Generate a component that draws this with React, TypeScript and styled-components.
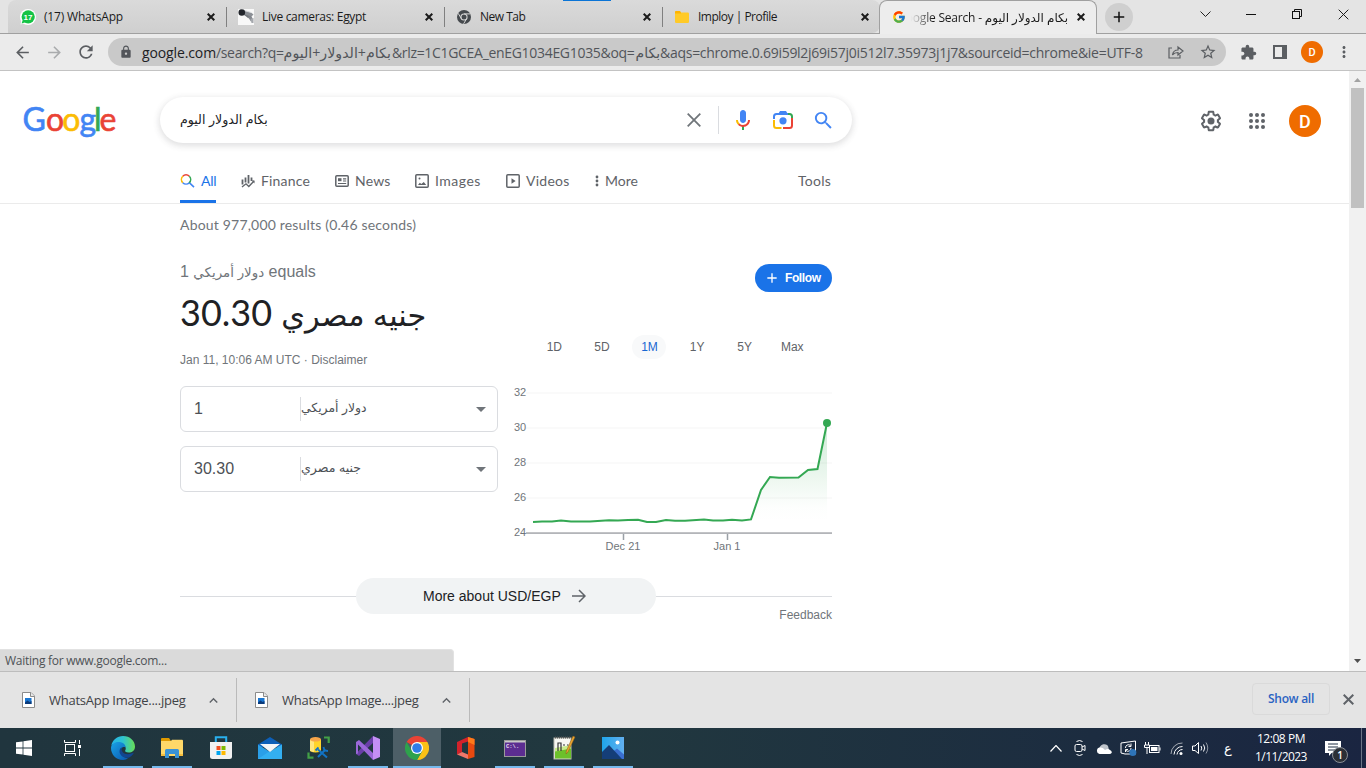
import React from "react";
import styled, { createGlobalStyle } from "styled-components";
import {
  MdArrowBack, MdArrowForward, MdRefresh, MdLock, MdStarBorder, MdExtension, MdMoreVert,
  MdKeyboardArrowUp, MdSearch, MdAdd,
} from "react-icons/md";
import { FcGoogle } from "react-icons/fc";

const SEGOE = `"Open Sans", "DejaVu Sans", sans-serif`;
const ARIAL = `"Liberation Sans", "DejaVu Sans", sans-serif`;
const GSANS = `Lato, "DejaVu Sans", sans-serif`;

const Global = createGlobalStyle`
  * { box-sizing: border-box; }
  body { margin: 0; background: #fff; overflow: hidden; font-family: ${ARIAL}; }
  svg { display: block; flex: none; }
`;

const Txt = styled.span<{ $s?: number; $f?: string; $ls?: number; $c?: string; $w?: number }>`
  display: inline-block;
  flex: none;
  white-space: pre;
  font-family: ${(p) => p.$f ?? ARIAL};
  font-size: ${(p) => p.$s ?? 12}px;
  font-weight: ${(p) => p.$w ?? 400};
  letter-spacing: ${(p) => p.$ls ?? 0}px;
  color: ${(p) => p.$c ?? "inherit"};
`;
const Spacer = styled.div<{ $w?: number; $h?: number }>`
  width: ${(p) => p.$w ?? 0}px; height: ${(p) => p.$h ?? 0}px; flex: none;
`;

const Desktop = styled.div`
  width: 1366px; height: 768px; display: flex; flex-direction: column; overflow: hidden; background: #fff;
`;

/* ---------- tab strip ---------- */
const TabStrip = styled.div`
  height: 34px; display: flex; position: relative; background: #e4e4e4; flex: none;
  border-bottom: 1px solid #a0a0a0;
`;
const TopAccent = styled.div`
  position: absolute; left: 563px; top: 0; width: 48px; height: 1px; background: #0a74d6;
`;
const TabGroup = styled.div`
  display: flex; width: 872px; margin-left: 8px; background: linear-gradient(#dadada, #cfcfcf);
  border-radius: 8px 8px 8px 0; height: 33px; flex: none;
`;
const Tab = styled.div<{ $last?: boolean }>`
  width: 218px; height: 33px; display: flex; align-items: center; padding: 0 11px 0 12px; position: relative;
  color: #1b1b1b;
  &::after {
    content: ""; display: ${(p) => (p.$last ? "none" : "block")};
    position: absolute; right: -1px; top: 7px; width: 1px; height: 20px; background: #808080;
  }
`;
const Favicon = styled.div`width: 16px; height: 16px; display: grid; place-items: center; flex: none;`;
const TabTitle = styled.div`flex: 1; margin-left: 8px; display: flex;`;
const ActiveTab = styled.div`
  width: 218px; height: 34px; background: #ededed; border: 1px solid #a0a0a0; border-bottom: 0; margin-left: -1px;
  border-radius: 8px 8px 0 0; display: flex; align-items: center; padding: 0 8px 1px 12px; z-index: 1; color: #1b1b1b;
  position: relative; flex: none;
`;
const ActiveTitle = styled.div`
  width: 157px; margin: 0 9px 0 5px; overflow: hidden; direction: rtl; display: flex; justify-content: flex-start;
  mask-image: linear-gradient(to right, transparent 0, #000 22px);
`;
const NewTab = styled.div`
  width: 28px; height: 28px; border-radius: 50%; background: #cfcfcf; margin: 3px 0 0 8px; display: grid; place-items: center;
`;
const Controls = styled.div`margin-left: auto; display: flex; height: 28px;`;
const Control = styled.div`width: 46px; display: grid; place-items: center;`;

/* ---------- toolbar ---------- */
const Toolbar = styled.div`
  height: 37px; flex: none; background: #ebebeb; border-bottom: 1px solid #c3c3c3; display: flex; align-items: center;
  padding-left: 6px; color: #5b5e62;
`;
const ToolBtn = styled.div<{ $c?: string }>`
  width: 32px; height: 28px; display: grid; place-items: center; color: ${(p) => p.$c ?? "#5b5e62"}; flex: none;
`;
const Omnibox = styled.div`
  width: 1118px; height: 28px; border-radius: 14px; background: #c9c9c9; margin: 0 6px; display: flex; align-items: center;
  padding-left: 11px; color: #52555a; flex: none;
`;
const Url = styled.div`display: flex; align-items: center; margin-left: 9px; width: 1018px; height: 28px;`;
const SmallAvatar = styled.div`
  width: 22px; height: 22px; border-radius: 50%; background: #ef6c00; color: #fff; display: grid; place-items: center;
`;

/* ---------- page ---------- */
const Viewport = styled.div`height: 600px; flex: none; display: flex; position: relative;`;
const Page = styled.div`width: 1349px; flex: none;`;
const Scrollbar = styled.div`
  width: 17px; background: #f1f1f1; display: flex; flex-direction: column; align-items: center; padding: 7px 0 8px;
`;
const Thumb = styled.div`width: 13px; height: 120px; background: #c1c1c1; margin: 6px 0 auto;`;
const Header = styled.div`height: 132px; border-bottom: 1px solid #ebebeb; box-sizing: content-box;`;
const HeaderTop = styled.div`display: flex; height: 72px; padding-top: 26px;`;
const Logo = styled.svg`margin: -4px 0 0 20px;`;
const SearchBox = styled.div`
  width: 692px; height: 46px; margin-left: 40px; border-radius: 24px; background: #fff; flex: none;
  box-shadow: 0 2px 6px 1px rgba(64,60,67,.16); display: flex; align-items: center; padding-left: 20px; color: #202124;
`;
const Query = styled.div`width: 494px; padding-bottom: 2px;`;
const Divider = styled.div`width: 1px; height: 28px; background: #dadce0; margin: 0 12px 0 4px;`;
const IconCell = styled.div<{ $w?: number }>`width: ${(p) => p.$w ?? 40}px; display: grid; place-items: center;`;
const HeaderRight = styled.div`
  display: flex; margin: 8px 28px 0 auto; height: 32px; align-items: center;
`;
const Avatar = styled.div`
  width: 32px; height: 32px; border-radius: 50%; background: #ef6c00; color: #fff; display: grid; place-items: center; margin-left: 24px;
`;
const Nav = styled.div`display: flex; height: 34px; margin: 26px 0 0 180px; color: #5f6368;`;
const NavItem = styled.div<{ $w: number; $gap?: number; $active?: boolean }>`
  width: ${(p) => p.$w}px; height: 34px; display: flex; align-items: center; padding-bottom: 9px;
  margin-right: ${(p) => p.$gap ?? 0}px; flex: none;
  border-bottom: 3px solid ${(p) => (p.$active ? "#1a73e8" : "transparent")};
  color: ${(p) => (p.$active ? "#1a73e8" : "inherit")};
  svg { margin: 1px ${(p) => (p.$active ? 5 : 6)}px 0 0; }
`;
const Stats = styled.div`height: 41px; margin-left: 180px; display: flex; align-items: center; color: #70757a;`;
const Card = styled.div`display: flex; margin: 19px 0 0 180px; width: 652px; height: 300px;`;
const Converter = styled.div`width: 318px; flex: none;`;
const Line = styled.div<{ $h: number; $mt?: number }>`
  display: flex; align-items: baseline; height: ${(p) => p.$h}px; line-height: ${(p) => p.$h}px; margin-top: ${(p) => p.$mt ?? 0}px; color: #70757a;
`;
const Field = styled.div`
  height: 46px; border: 1px solid #dadce0; border-radius: 6px; margin-bottom: 14px; display: flex; align-items: center;
  padding: 0 11px 0 13px; color: #4d5156;
`;
const FieldValue = styled.div`width: 106px; display: flex;`;
const FieldUnit = styled.div`
  flex: 1; height: 24px; border-left: 1px solid #dadce0; display: flex; align-items: center; padding-bottom: 2px; margin-bottom: 1px;
`;
const ChartSide = styled.div`width: 334px; display: flex; flex-direction: column;`;
const Follow = styled.div`
  width: 77px; height: 28px; border-radius: 14px; background: #1a73e8; color: #fff; align-self: flex-end; display: flex; align-items: center;
  padding-left: 9px; gap: 5px;
`;
const Ranges = styled.div`display: flex; margin: 43px 0 0 39.300px; gap: 13.600px;`;
const Range = styled.div<{ $on?: boolean }>`
  width: 34px; height: 24px; border-radius: 12px; display: grid; place-items: center; flex: none;
  background: ${(p) => (p.$on ? "#f8f9fa" : "transparent")}; color: ${(p) => (p.$on ? "#1967d2" : "#5f6368")};
`;
const Chart = styled.svg`margin: 21px 0 0 12px;`;
const MoreRow = styled.div`
  width: 652px; height: 36px; margin: 14px 0 0 180px; display: flex; align-items: center;
`;
const Rule = styled.div`flex: 1; height: 1px; background: #dadce0;`;
const MorePill = styled.div`
  width: 300px; height: 36px; border-radius: 18px; background: #f1f3f4; display: flex; align-items: center; padding-left: 67px; color: #202124; gap: 11px;
`;
const Feedback = styled.div`width: 652px; margin: -6px 0 0 180px; display: flex; justify-content: flex-end; color: #70757a;`;
const StatusBubble = styled.div`
  position: absolute; left: 0; bottom: 0; width: 454px; height: 22px; background: #dadada; border: 1px solid #e2e2e2; border-left: 0; border-bottom: 0;
  border-radius: 0 4px 0 0; padding-left: 5px; display: flex; align-items: center; color: #4e5256;
`;

/* ---------- downloads ---------- */
const Downloads = styled.div`
  height: 57px; flex: none; background: #e4e4e4; border-top: 1px solid #bdbdbd; display: flex; align-items: center; color: #3f4246;
`;
const Download = styled.div<{ $w: number }>`
  width: ${(p) => p.$w}px; height: 44px; border-right: 1px solid #bababa; display: flex; align-items: center; padding-right: 14px; justify-content: flex-end;
`;
const FileName = styled.div`width: 137px; margin: 0 19px 0 14px; display: flex;`;
const ShowAll = styled.div`
  width: 78px; height: 32px; border: 1px solid #dadada; border-radius: 4px; margin: 0 0 3px auto; display: grid; place-items: center; color: #2a62c2;
`;
const CloseBar = styled.div`width: 36px; display: grid; place-items: center; margin-bottom: 2px;`;

/* ---------- taskbar ---------- */
const Taskbar = styled.div`
  height: 40px; flex: none; display: flex; background: linear-gradient(90deg, #20353e 0, #21383f 45%, #1c2c40 80%, #1a2541 100%); color: #fff;
`;
const Task = styled.div<{ $line?: boolean; $on?: boolean; $ml?: number }>`
  width: 48px; margin-left: ${(p) => p.$ml ?? 0}px; display: grid; place-items: center; position: relative; flex: none;
  background: ${(p) => (p.$on ? "#4d5f67" : "transparent")};
  &::after {
    content: ""; display: ${(p) => (p.$line ? "block" : "none")}; position: absolute; bottom: 0; height: 2px; background: #76b9ed;
    left: ${(p) => (p.$on ? 0 : 4)}px; right: ${(p) => (p.$on ? 0 : 4)}px;
  }
`;
const Tray = styled.div`margin-left: auto; display: flex; align-items: center;`;
const TrayCell = styled.div<{ $w?: number }>`width: ${(p) => p.$w ?? 24}px; height: 40px; display: grid; place-items: center; position: relative;`;
const Clock = styled.div`width: 74px; display: flex; flex-direction: column; align-items: center; height: 36px; line-height: 18px;`;
const Badge = styled.div`
  position: absolute; left: 14px; top: 19px; width: 16px; height: 16px; border-radius: 50%; background: #2b2f36; border: 1px solid #8a8f96;
  display: grid; place-items: center; line-height: 14px;
`;
const PeekLine = styled.div`width: 5px; height: 40px; border-left: 1px solid #6a7586;`;

const X = ({ s = 8, w = 2, c = "#1b1b1b" }: { s?: number; w?: number; c?: string }) => (
  <svg width={s} height={s} viewBox={`0 0 ${s} ${s}`}>
    <path d={`M.7.7L${s - 0.7} ${s - 0.7}M${s - 0.7}.7L.7 ${s - 0.7}`} stroke={c} strokeWidth={w} />
  </svg>
);

const WhatsAppIcon = () => (
  <svg width="16" height="16" viewBox="0 0 16 16">
    <circle cx="8" cy="8" r="8" fill="#fff" />
    <path d="M.5 15.500l1-4L5 14z" fill="#fff" />
    <circle cx="8.200" cy="7.800" r="6.600" fill="#15c346" />
    <path d="M1.600 14.600l1.300-4 2.600 2.700z" fill="#15c346" />
    <text x="8" y="10.700" fontFamily="Liberation Sans, sans-serif" fontSize="8" fontWeight="700" fill="#fff" textAnchor="middle">17</text>
  </svg>
);
const CameraIcon = () => (
  <svg width="16" height="16" viewBox="0 0 16 16">
    <rect width="16" height="16" fill="#f8f8f8" />
    <path d="M2 .5l11 3 2.500 2L13 8 4 5.500z" fill="#8c9096" />
    <path d="M5 1l8 2.500" stroke="#d8dadd" strokeWidth="1" />
    <path d="M5 5l8 2.500 1 2-4-.5z" fill="#6f7379" />
    <circle cx="3.800" cy="3.500" r="3.300" fill="#22252b" />
    <path d="M9.500 7.500h4l1.500 3-2 2z" fill="#85898f" />
    <path d="M12.500 10l1 4h2V9z" fill="#a5a8ad" />
  </svg>
);
const GreyChrome = () => (
  <svg width="14" height="14" viewBox="0 0 14 14">
    <circle cx="7" cy="7" r="7" fill="#45494d" />
    <circle cx="7" cy="7" r="3.600" fill="#d6d6d6" />
    <circle cx="7" cy="7" r="2.500" fill="#45494d" />
    <path d="M7 3.900h6.200M4.300 8.600L1.200 3.300M9.700 8.600l-3.100 5.200" stroke="#d6d6d6" strokeWidth="1" />
  </svg>
);
const FolderIcon = () => (
  <svg width="14" height="12" viewBox="0 0 14 12">
    <path d="M0 1.200Q0 0 1.200 0h3.600L6 1.600h6.800Q14 1.600 14 2.800V10.800Q14 12 12.800 12H1.200Q0 12 0 10.800z" fill="#ffca28" />
    <path d="M0 1.200Q0 0 1.200 0h3.600L6 1.600v1H0z" fill="#ffb300" />
  </svg>
);
const LensIcon = () => (
  <svg width="24" height="24" viewBox="0 0 24 24" fill="none" strokeWidth="2">
    <path d="M3 11V8.500Q3 6 5.500 6H17" stroke="#4285f4" />
    <path d="M7.500 5.500L9 3h6l1.500 2.500z" fill="#4285f4" />
    <path d="M17 6h1.500Q21 6 21 8.500V10" stroke="#34a853" />
    <path d="M21 10v7.500Q21 20 18.500 20H12" stroke="#ea4335" />
    <path d="M3 12v5.500Q3 20 5.500 20H10.500" stroke="#fbbc04" />
    <circle cx="12" cy="12.800" r="3.600" fill="#4285f4" />
  </svg>
);
const MicIcon = () => (
  <svg width="24" height="24" viewBox="0 0 24 24">
    <path fill="#4285f4" d="m12 15c1.66 0 3-1.31 3-2.97v-7.02c0-1.66-1.34-3.01-3-3.01s-3 1.34-3 3.01v7.02c0 1.66 1.34 2.97 3 2.97z" />
    <path fill="#34a853" d="m11 18.080h2v3.920h-2z" />
    <path fill="#fbbc04" d="m7.05 16.870c-1.270-1.330-2.050-2.830-2.050-4.870h2c0 1.450 0.560 2.420 1.470 3.380v0.320l-1.150 1.180z" />
    <path fill="#ea4335" d="m12 16.930a4.970 5.250 0 0 1 -3.540 -1.550l-1.410 1.490c1.260 1.340 3.020 2.130 4.950 2.130 3.870 0 6.990-2.920 6.990-7h-1.990c0 2.920-2.240 4.930-5 4.930z" />
  </svg>
);
const GearIcon = () => (
  <svg width="24" height="24" viewBox="0 0 24 24" fill="#5f6368">
    <path d="M13.85 22.25h-3.7c-.74 0-1.36-.54-1.45-1.27l-.27-1.89c-.27-.14-.53-.29-.79-.46l-1.8.72c-.7.26-1.47-.03-1.81-.65L2.2 15.53c-.35-.66-.2-1.44.36-1.88l1.53-1.19c-.01-.15-.02-.3-.02-.46 0-.15.01-.31.02-.46l-1.52-1.19c-.59-.45-.74-1.26-.37-1.88l1.85-3.19c.34-.62 1.11-.9 1.79-.63l1.81.73c.26-.17.52-.32.78-.46l.27-1.91c.09-.7.71-1.25 1.44-1.25h3.7c.74 0 1.36.54 1.45 1.27l.27 1.89c.27.14.53.29.79.46l1.8-.72c.71-.26 1.48.03 1.82.65l1.84 3.18c.36.66.2 1.44-.36 1.88l-1.52 1.19c.01.15.02.3.02.46s-.01.31-.02.46l1.52 1.19c.56.45.72 1.23.37 1.86l-1.86 3.22c-.34.62-1.11.9-1.8.63l-1.8-.72c-.26.17-.52.32-.78.46l-.27 1.91c-.1.68-.72 1.22-1.46 1.22zm-3.23-2h2.76l.37-2.55.53-.22c.44-.18.88-.44 1.34-.78l.45-.34 2.38.96 1.38-2.4-2.03-1.58.07-.56c.03-.26.06-.51.06-.78s-.03-.53-.06-.78l-.07-.56 2.03-1.58-1.39-2.4-2.39.96-.45-.35c-.42-.32-.87-.58-1.33-.77l-.52-.22-.37-2.55h-2.76l-.37 2.55-.53.21c-.44.19-.88.44-1.34.79l-.45.33-2.38-.95-1.39 2.39 2.03 1.58-.07.56a7 7 0 0 0-.06.79c0 .26.02.53.06.78l.07.56-2.03 1.58 1.38 2.4 2.39-.96.45.35c.43.33.86.58 1.33.77l.53.22.38 2.55z" />
    <circle cx="12" cy="12" r="3.500" />
  </svg>
);
const AppsIcon = () => (
  <svg width="16" height="16" viewBox="0 0 16 16" fill="#5f6368">
    {[2, 8, 14].map((y) => [2, 8, 14].map((x) => <circle key={`${x}${y}`} cx={x} cy={y} r="2" />))}
  </svg>
);
const AllIcon = () => (
  <svg width="16" height="16" viewBox="0 0 16 16" fill="none" strokeWidth="1.600">
    <path d="M2.800 3.200A4.600 4.600 0 0 1 9.300 3.200" stroke="#ea4335" />
    <path d="M2.800 3.200A4.600 4.600 0 0 0 2.800 9.700" stroke="#fbbc04" />
    <path d="M2.800 9.700A4.600 4.600 0 0 0 9.300 9.700L14 14.200" stroke="#4285f4" />
    <path d="M9.300 9.700A4.600 4.600 0 0 0 9.300 3.200" stroke="#34a853" />
  </svg>
);
const FinanceIcon = () => (
  <svg width="14" height="14" viewBox="0 0 14 14" fill="none" stroke="#5f6368">
    <path d="M1.500 5.500v5M4.500 3.500v5M7.500 1v8.500M10.500 3.500v3.500" strokeWidth="1.800" />
    <path d="M1 13L5 9.800l2.800 2.600L13 7" strokeWidth="1.400" />
    <path d="M10.500 6.500h3v3z" fill="#5f6368" stroke="none" />
  </svg>
);
const NewsIcon = () => (
  <svg width="14" height="12" viewBox="0 0 14 12" fill="none" stroke="#5f6368">
    <rect x=".8" y=".8" width="12.400" height="10.400" rx="1" strokeWidth="1.500" />
    <rect x="3" y="3.200" width="3.500" height="3" fill="#5f6368" stroke="none" />
    <path d="M8 3.800h3.200M8 6h3.200M3 8.500h8.200" strokeWidth="1.200" />
  </svg>
);
const ImagesIcon = () => (
  <svg width="14" height="14" viewBox="0 0 14 14" fill="none" stroke="#5f6368">
    <rect x=".8" y=".8" width="12.400" height="12.400" rx="1" strokeWidth="1.500" />
    <path d="M3 11l1.800-2.300 1.500 1.400L8.800 8l2.400 3z" fill="#5f6368" stroke="none" />
    <circle cx="4.500" cy="4.500" r="1" fill="#5f6368" stroke="none" />
  </svg>
);
const VideosIcon = () => (
  <svg width="14" height="14" viewBox="0 0 14 14" fill="none" stroke="#5f6368">
    <rect x=".8" y=".8" width="12.400" height="12.400" rx="1" strokeWidth="1.500" />
    <path d="M5.500 4.300v5.400L9.600 7z" fill="#5f6368" stroke="none" />
  </svg>
);
const DotsIcon = () => (
  <svg width="4" height="12" viewBox="0 0 4 12" fill="#5f6368">
    <circle cx="2" cy="2" r="1.400" /><circle cx="2" cy="6" r="1.400" /><circle cx="2" cy="10" r="1.400" />
  </svg>
);
const Caret = () => (
  <svg width="10" height="5" viewBox="0 0 10 5"><path d="M0 0h10L5 5z" fill="#70757a" /></svg>
);
const FileIcon = () => (
  <svg width="13" height="16" viewBox="0 0 13 16">
    <path d="M.5.5h8.500l3.500 3.500v11.500H.5z" fill="#fff" stroke="#8b8b8b" />
    <path d="M8.500.5v4h4" fill="#e8e8e8" stroke="#8b8b8b" />
    <rect x="3" y="6" width="6.500" height="6" fill="#1976d2" />
    <path d="M3 12V10.500l2.500-2 2 1.500 2-1V12z" fill="#0b3a7a" />
  </svg>
);

const points: [number, number][] = [
  [533, 522], [542, 521.5], [552, 521.5], [561, 520.4], [571, 521.6], [590, 521.6], [609, 520.2], [618, 520.6], [628, 519.9],
  [638, 519.7], [647, 521.9], [656, 521.9], [666, 520], [675, 520.7], [685, 520.7], [704, 519.5], [713, 520.6], [723, 520.6],
  [732, 519.8], [742, 520.4], [751, 519.4], [761, 490], [770, 477], [779, 477.7], [798.5, 477.6], [808, 470], [817.5, 469], [827, 423],
];
const linePath = points.map(([x, y], i) => `${i ? "L" : "M"}${x - 510} ${y - 380}`).join("");

const PriceChart = () => (
  <Chart width="324" height="176" viewBox="0 0 324 176">
    <defs>
      <linearGradient id="fade" x1="0" y1="43" x2="0" y2="142" gradientUnits="userSpaceOnUse">
        <stop offset="0" stopColor="#34a853" stopOpacity=".24" />
        <stop offset="0.850" stopColor="#34a853" stopOpacity="0.01" />
        <stop offset="1" stopColor="#34a853" stopOpacity="0" />
      </linearGradient>
    </defs>
    {[13, 48, 83, 118].map((y) => (
      <rect key={y} x="16" y={y - 1} width="306" height="2" fill="#fafafa" />
    ))}
    <path d={`${linePath}L317 153L23 153Z`} fill="url(#fade)" />
    <rect x="16" y="152.200" width="306" height="1.800" fill="#b3b5b9" />
    <path d="M113.500 154v6M217.500 154v6" stroke="#9aa0a6" strokeWidth="1.500" />
    <path d={linePath} fill="none" stroke="#34a853" strokeWidth="2" />
    <circle cx="317" cy="43" r="4" fill="#34a853" />
    <g fontFamily="Liberation Sans, sans-serif" fontSize="11" fill="#70757a">
      {["32", "30", "28", "26", "24"].map((t, i) => (
        <text key={t} x="4" y={16 + i * 35}>{t}</text>
      ))}
      <text x="113" y="170" textAnchor="middle">Dec 21</text>
      <text x="217" y="170" textAnchor="middle">Jan 1</text>
    </g>
  </Chart>
);

/* taskbar icons */
const Windows = () => (
  <svg width="16" height="16" viewBox="0 0 16 16" fill="#fff">
    <path d="M0 2.300L6.600 1.400V7.600H0zM7.400 1.300L16 0V7.600H7.400zM0 8.400H6.600V14.600L0 13.700zM7.400 8.400H16V16L7.400 14.700z" />
  </svg>
);
const TaskView = () => (
  <svg width="17" height="16" viewBox="0 0 17 16" fill="none" stroke="#fff">
    <path d="M.5 0v2.500h11V0M.5 16v-2.500h11V16M15.500 0v4M15.500 9v7" /><rect x="1.500" y="4.500" width="9" height="7" />
    <rect x="14" y="5" width="3" height="3" fill="#fff" stroke="none" />
  </svg>
);
const Edge = () => (
  <svg width="24" height="24" viewBox="0 0 24 24">
    <defs>
      <linearGradient id="e1" x1="0" x2="1"><stop offset="0" stopColor="#25b4e8" /><stop offset=".5" stopColor="#2fc3cf" /><stop offset="1" stopColor="#68dd55" /></linearGradient>
      <linearGradient id="e2" x1="0" y1="0" x2="1" y2="1"><stop offset="0" stopColor="#1aa3e6" /><stop offset="1" stopColor="#0a57b0" /></linearGradient>
    </defs>
    <path d="M.3 9.500C1.500 4 6.200 0 12 0c7 0 12 5 12 10.500 0 4-3 6-6.300 6-3 0-4.200-1-3.400-2.200 1-1.500.8-5.300-4.300-6.300C6 7.200 2 7.800.3 9.500z" fill="url(#e1)" />
    <path d="M0 12c0-4 4-6.500 8.500-6 4 .4 6.300 3 6 5.500-1.500-1.500-6 .5-5 5 .8 3.700 4.500 5.500 7.500 5.500-1 1-3 2-5 2C5 24 0 18.500 0 12z" fill="url(#e2)" />
    <path d="M9 13c-2 5 2.500 9.500 8.500 8.700 2-.8 4-2.500 5-4.200.3-.6-.2-.8-.7-.5-4 2-9.300 1.500-10.800-2-.6-1.400-.3-2.600.5-3.500-1 0-2 .5-2.500 1.500z" fill="#11458f" />
  </svg>
);
const Explorer = () => (
  <svg width="22" height="20" viewBox="0 0 22 20">
    <path d="M0 1Q0 0 1 0h7l2 3H0z" fill="#e09a00" /><path d="M0 3h10l1-1.300h10Q22 1.700 22 3v15H0z" fill="#ffd869" />
    <path d="M4 20v-7.500Q4 11 5.500 11h11Q18 11 18 12.500V20h-4v-4H8v4z" fill="#3a93d6" /><path d="M0 18h4v-2H0zM18 18h4v-2h-4z" fill="#f5bd3c" />
  </svg>
);
const Store = () => (
  <svg width="24" height="24" viewBox="0 0 24 24">
    <path d="M6.800 7V1.300h10.400V7" fill="none" stroke="#29b0ee" strokeWidth="2" />
    <path d="M1 6h22v14.500Q23 23 20.500 23h-17Q1 23 1 20.500z" fill="#f1f1f1" />
    <path d="M7.500 10h4v4h-4z" fill="#f25022" /><path d="M12.500 10h4v4h-4z" fill="#7fba00" />
    <path d="M7.500 15h4v4h-4z" fill="#00a4ef" /><path d="M12.500 15h4v4h-4z" fill="#ffb900" />
  </svg>
);
const Mail = () => (
  <svg width="24" height="22" viewBox="0 0 24 22">
    <path d="M0 7.500L12 0l12 7.500V10H0z" fill="#0d5fb8" />
    <path d="M0 7.500L12 15 24 7.500V22H0z" fill="#2a9fe8" />
    <path d="M0 22L12 14l12-6.500V22z" fill="#38b6f5" opacity=".7" />
    <path d="M2 7h20l-10 8z" fill="#f3f5f8" />
  </svg>
);
const Ssms = () => (
  <svg width="24" height="24" viewBox="0 0 24 24">
    <path d="M3 3.500h11v11.500Q8.500 18 3 15z" fill="#ffd42a" /><path d="M3 3.500h4v12.500l-4-1z" fill="#ffe680" /><ellipse cx="8.500" cy="3.300" rx="5.500" ry="2.300" fill="#f6a54a" />
    <path d="M17 1.500h4.700V7M1.500 16.500v5.200h5" fill="none" stroke="#43a047" strokeWidth="2.200" />
    <path d="M11 13.500l9 8M11 21l7.500-7.500" stroke="#1273c4" strokeWidth="2" /><path d="M8.500 14.500l3-3M16.500 11l1 3.500 3.500.5" stroke="#1273c4" strokeWidth="1.800" fill="none" />
  </svg>
);
const VisualStudio = () => (
  <svg width="24" height="24" viewBox="0 0 24 24">
    <path d="M17 0l7 3v18l-7 3z" fill="#c48ff5" />
    <path d="M0 18l3 2L17 7V0L5.500 11.800 2 15.500V8.500L0 6z" fill="#6a3fa8" />
    <path d="M3 4l14 13v7L2 8.500v9L0 18V6z" fill="#9a68d8" />
  </svg>
);
const Chrome = () => (
  <svg width="24" height="24" viewBox="0 0 24 24">
    <path d="M12 12L1.600 6A12 12 0 0 1 22.400 6z" fill="#ea4335" />
    <path d="M12 6h10.400A12 12 0 0 1 12 24l5.200-9z" fill="#fbc116" />
    <path d="M1.600 6A12 12 0 0 0 12 24l5.200-9L12 12 6.800 15z" fill="#2ea24c" />
    <circle cx="12" cy="12" r="6" fill="#fff" /><circle cx="12" cy="12" r="4.800" fill="#2f7de9" />
  </svg>
);
const Office = () => (
  <svg width="18" height="22" viewBox="0 0 18 22">
    <path d="M0 5L11 0v4.500L5 6.500V15l-5 2.500z" fill="#d3222b" /><path d="M11 0l6.500 2v18L11 22z" fill="#e8490f" />
    <path d="M0 17.500L5 15l6 2.500V22z" fill="#f0776a" /><path d="M11 0l6.500 2v6L11 5z" fill="#ff7a1a" />
  </svg>
);
const Terminal = () => (
  <svg width="22" height="17" viewBox="0 0 22 17">
    <rect x=".5" y=".5" width="21" height="16" fill="#5c2d91" stroke="#9a9a9a" /><rect x="1" y="1" width="20" height="1.500" fill="#c9c9c9" />
    <text x="2" y="8" fontFamily="Liberation Mono, monospace" fontSize="5.500" fontWeight="700" fill="#e8e0f0">C:\.</text>
  </svg>
);
const Notepad = () => (
  <svg width="23" height="24" viewBox="0 0 23 24">
    <rect x="1" y="2" width="17" height="21" fill="#f7f7f2" stroke="#b9b9b0" /><path d="M2 12l16-3v13H2z" fill="#c8ec8a" /><path d="M2 15.500l16-3v10H2z" fill="#6cc02a" />
    <path d="M2 1.500h15" stroke="#555" strokeWidth="2" strokeDasharray="1 1" /><path d="M5 15V7h3v8M10 9h2M14 9h1.500" fill="none" stroke="#333" strokeWidth="1.200" />
    <path d="M22 1l-7 15-2 2 .3-3L20 0z" fill="#e9a532" stroke="#8a5a14" strokeWidth=".5" />
  </svg>
);
const Photos = () => (
  <svg width="22" height="22" viewBox="0 0 22 22">
    <defs><linearGradient id="ph" x1="0" x2="1"><stop offset="0" stopColor="#1fa5ea" /><stop offset="1" stopColor="#62b0f0" /></linearGradient></defs>
    <rect width="22" height="22" fill="url(#ph)" /><path d="M9 16l6-4.500 7 6V22H9z" fill="#3a6fd0" />
    <path d="M0 15l7-7 13 14H0z" fill="#153e78" /><circle cx="15.500" cy="5.500" r="2" fill="#fff" />
  </svg>
);

const tasks: { el: React.ReactNode; line?: boolean; on?: boolean }[] = [
  { el: <Edge />, line: true }, { el: <Explorer />, line: true }, { el: <Store /> }, { el: <Mail /> }, { el: <Ssms /> },
  { el: <VisualStudio />, line: true }, { el: <Chrome />, line: true, on: true }, { el: <Office /> }, { el: <Terminal />, line: true },
  { el: <Notepad />, line: true }, { el: <Photos />, line: true },
];

const tabs = [
  { icon: <WhatsAppIcon />, title: "(17) WhatsApp", ls: -0.18 },
  { icon: <CameraIcon />, title: "Live cameras: Egypt", ls: -0.3 },
  { icon: <GreyChrome />, title: "New Tab", ls: -0.5 },
  { icon: <FolderIcon />, title: "Imploy | Profile", ls: -0.5 },
];

const navItems = [
  { icon: <AllIcon />, label: "All", w: 36, gap: 25, ls: -0.2 },
  { icon: <FinanceIcon />, label: "Finance", w: 69, gap: 25, ls: 0.18 },
  { icon: <NewsIcon />, label: "News", w: 55, gap: 25, ls: 0.2 },
  { icon: <ImagesIcon />, label: "Images", w: 66, gap: 25, ls: 0.5 },
  { icon: <VideosIcon />, label: "Videos", w: 64, gap: 25, ls: 0.25 },
  { icon: <DotsIcon />, label: "More", w: 43, gap: 160, ls: 0 },
  { icon: null, label: "Tools", w: 33, gap: 0, ls: 0.25 },
];

const ranges = ["1D", "5D", "1M", "1Y", "5Y", "Max"];

export default function App() {
  return (
    <Desktop>
      <Global />
      <TabStrip>
        <TopAccent />
        <TabGroup>
          {tabs.map((t, i) => (
            <Tab key={t.title} $last={i === tabs.length - 1}>
              <Favicon>{t.icon}</Favicon>
              <TabTitle><Txt $f={SEGOE} $ls={t.ls}>{t.title}</Txt></TabTitle>
              <X />
            </Tab>
          ))}
        </TabGroup>
        <ActiveTab>
          <FcGoogle size={14} />
          <ActiveTitle><Txt $f={SEGOE}>بكام الدولار اليوم</Txt><Txt $f={SEGOE} $ls={-0.2} dir="ltr">Google Search - </Txt></ActiveTitle>
          <X />
        </ActiveTab>
        <NewTab><MdAdd size={18} color="#111" /></NewTab>
        <Controls>
          <Control><svg width="11" height="6" viewBox="0 0 11 6"><path d="M.5.5l5 5 5-5" fill="none" stroke="#222" /></svg></Control>
          <Control><svg width="10" height="1"><rect width="10" height="1" fill="#111" /></svg></Control>
          <Control><svg width="10" height="10" viewBox="0 0 10 10" fill="none" stroke="#111"><rect x=".5" y="2.500" width="7" height="7" /><path d="M2.500 2.500v-2h7v7h-2" /></svg></Control>
          <Control><X s={11} w={1} /></Control>
        </Controls>
      </TabStrip>

      <Toolbar>
        <ToolBtn><MdArrowBack size={19} /></ToolBtn>
        <ToolBtn $c="#a9abad"><MdArrowForward size={19} /></ToolBtn>
        <ToolBtn><MdRefresh size={20} /></ToolBtn>
        <Omnibox>
          <MdLock size={14} />
          <Url>
            <Txt $s={14} $f={SEGOE} $c="#202124" $ls={-0.12}>google.com</Txt>
            <Txt $s={14} $f={SEGOE} $ls={-0.35}>/search?q=</Txt>
            <Txt $s={14.2} $f={SEGOE} dir="rtl">بكام+الدولار+اليوم</Txt>
            <Spacer $w={1} />
            <Txt $s={14} $f={SEGOE} $ls={-0.31}>&amp;rlz=1C1GCEA_enEG1034EG1035&amp;oq=</Txt>
            <Spacer $w={1} />
            <Txt $s={14} $f={SEGOE}>بكام</Txt>
            <Txt $s={14} $f={SEGOE} $ls={-0.28}>&amp;aqs=chrome.0.69i59l2j69i57j0i512l7.35973j1j7&amp;sourceid=chrome&amp;ie=UTF-8</Txt>
          </Url>
          <ToolBtn>
            <svg width="16" height="14" viewBox="0 0 16 14" fill="none" stroke="#5b5e62" strokeWidth="1.200"><path d="M4 3H1v10h11v-3" /><path d="M4.500 10C5 6.500 7 5 10 5V2l5 4-5 4V7.500C7.500 7.500 6 8 4.500 10z" /></svg>
          </ToolBtn>
          <ToolBtn><MdStarBorder size={18} /></ToolBtn>
        </Omnibox>
        <ToolBtn><MdExtension size={17} /></ToolBtn>
        <ToolBtn><svg width="14" height="14" viewBox="0 0 14 14"><path d="M0 0h14v14H0zM2 2v10h7V2z" fill="#5b5e62" fillRule="evenodd" /></svg></ToolBtn>
        <ToolBtn><SmallAvatar><Txt $f="Roboto, sans-serif" $s={11} $w={500}>D</Txt></SmallAvatar></ToolBtn>
        <ToolBtn><MdMoreVert size={18} /></ToolBtn>
      </Toolbar>

      <Viewport>
        <Page>
          <Header>
            <HeaderTop>
              <Logo width="100" height="52" viewBox="0 0 100 52" fontFamily="Lato, sans-serif" fontSize="32" strokeWidth=".6">
                <text y="37.500">
                  <tspan x="2.500" fill="#4285f4" stroke="#4285f4">G</tspan><tspan x="26" fill="#ea4335" stroke="#ea4335">o</tspan>
                  <tspan x="42.300" fill="#fbbc05" stroke="#fbbc05">o</tspan><tspan x="59.500" fill="#4285f4" stroke="#4285f4">g</tspan>
                  <tspan x="74" fill="#34a853" stroke="#34a853">l</tspan><tspan x="79.500" fill="#ea4335" stroke="#ea4335">e</tspan>
                </text>
              </Logo>
              <SearchBox>
                <Query><Txt $s={12.6}>بكام الدولار اليوم</Txt></Query>
                <IconCell><X s={14} w={1.8} c="#70757a" /></IconCell>
                <Divider />
                <IconCell $w={24}><MicIcon /></IconCell>
                <IconCell $w={56}><LensIcon /></IconCell>
                <IconCell $w={24}><MdSearch size={23} color="#4285f4" /></IconCell>
              </SearchBox>
              <HeaderRight><GearIcon /><Spacer $w={26} /><AppsIcon /><Avatar><Txt $f="Roboto, sans-serif" $s={18} $w={500}>D</Txt></Avatar></HeaderRight>
            </HeaderTop>
            <Nav>
              {navItems.map((n, i) => (
                <NavItem key={n.label} $w={n.w} $gap={n.gap} $active={i === 0}>
                  {n.icon}<Txt $f={GSANS} $s={14} $ls={n.ls}>{n.label}</Txt>
                </NavItem>
              ))}
            </Nav>
          </Header>
          <Stats><Txt $f={GSANS} $s={14} $ls={0.19}>About 977,000 results (0.46 seconds)</Txt></Stats>
          <Card>
            <Converter>
              <Line $h={16}><Txt $s={16}>1 </Txt><Txt $s={13.4}>دولار أمريكي</Txt><Txt $s={16}> equals</Txt></Line>
              <Line $h={44} $mt={10}><Txt $f={GSANS} $s={36} $c="#202124">30.30 </Txt><Txt $s={30.4} $c="#202124">جنيه مصري</Txt></Line>
              <Line $h={16} $mt={18}><Txt>Jan 11, 10:06 AM UTC · </Txt><Txt>Disclaimer</Txt></Line>
              <Spacer $h={18} />
              <Field><FieldValue><Txt $s={16}>1</Txt></FieldValue><FieldUnit><Txt $s={12.4}>دولار أمريكي</Txt></FieldUnit><Caret /></Field>
              <Field><FieldValue><Txt $s={16}>30.30</Txt></FieldValue><FieldUnit><Txt $s={12.6}>جنيه مصري</Txt></FieldUnit><Caret /></Field>
            </Converter>
            <ChartSide>
              <Follow><MdAdd size={16} /><Txt $w={700} $ls={-0.4}>Follow</Txt></Follow>
              <Ranges>
                {ranges.map((r) => <Range key={r} $on={r === "1M"}><Txt>{r}</Txt></Range>)}
              </Ranges>
              <PriceChart />
            </ChartSide>
          </Card>
          <MoreRow><Rule /><MorePill><Txt $s={14}>More about USD/EGP</Txt>
            <svg width="14" height="14" viewBox="0 0 14 14" fill="none" stroke="#5f6368" strokeWidth="1.500"><path d="M0 7h13M7 1l6 6-6 6" /></svg>
          </MorePill><Rule /></MoreRow>
          <Feedback><Txt>Feedback</Txt></Feedback>
        </Page>
        <Scrollbar>
          <svg width="7" height="4" viewBox="0 0 7 4"><path d="M3.500 0L7 4H0z" fill="#a3a3a3" /></svg>
          <Thumb />
          <svg width="7" height="4" viewBox="0 0 7 4"><path d="M0 0h7L3.500 4z" fill="#505050" /></svg>
        </Scrollbar>
        <StatusBubble><Txt $f={SEGOE} $ls={-0.26}>Waiting for www.google.com...</Txt></StatusBubble>
      </Viewport>

      <Downloads>
        {[237, 233].map((w) => (
          <Download key={w} $w={w}><FileIcon /><FileName><Txt $f={SEGOE} $s={13} $ls={-0.25}>WhatsApp Image....jpeg</Txt></FileName><MdKeyboardArrowUp size={17} color="#5f6368" /></Download>
        ))}
        <ShowAll><Txt $f={SEGOE} $w={600} $ls={-0.25}>Show all</Txt></ShowAll>
        <CloseBar><X s={11} w={2} c="#5f6368" /></CloseBar>
      </Downloads>

      <Taskbar>
        <Task><Windows /></Task>
        <Task><TaskView /></Task>
        {tasks.map((t, i) => <Task key={i} $ml={i ? 1 : 3} $line={t.line} $on={t.on}>{t.el}</Task>)}
        <Tray>
          <TrayCell><svg width="12" height="7" viewBox="0 0 12 7"><path d="M.5 6.500l5.500-6 5.500 6" fill="none" stroke="#fff" strokeWidth="1.200" /></svg></TrayCell>
          <TrayCell><svg width="12" height="16" viewBox="0 0 12 16" fill="none" stroke="#fff"><path d="M2.500 1.500Q5.500-.5 8.500 1.500M2.500 14.500Q5.500 16.500 8.500 14.500" /><rect x="1" y="4.500" width="7" height="7" rx="1.500" /><path d="M8 7l3-1.500v5L8 9" /></svg></TrayCell>
          <TrayCell><svg width="16" height="11" viewBox="0 0 16 11"><path d="M4 10.500a4 4 0 0 1-.5-6A5 5 0 0 1 12 3l1 4z" fill="#bfc4ca" /><path d="M3.500 11a3.300 3.300 0 0 1 .5-6.500Q7 4 9 7q3-2 5 0 2.500 1.500 1.500 3-.5 1-2 1z" fill="#fff" /></svg></TrayCell>
          <TrayCell><svg width="17" height="16" viewBox="0 0 17 16" fill="none" stroke="#fff"><path d="M1 3l14.500-2v13H5L1 13z" /><path d="M5.500 8A3 3 0 0 1 10.500 5.500M11 3.500v3H8.500M11 8A3 3 0 0 1 6 10.500M5.500 12V9.500H8" /><circle cx="12.800" cy="12.500" r="3.500" fill="#2e74b8" stroke="none" /></svg></TrayCell>
          <TrayCell><svg width="17" height="13" viewBox="0 0 17 13" fill="none" stroke="#fff"><path d="M1.500 0v3M4.500 0v3M.5 3h5v2.500h-5zM3 5.500V12" /><rect x="5.500" y="3.500" width="9.500" height="7" /><rect x="7" y="5" width="6.500" height="4" fill="#fff" stroke="none" /><path d="M16 5.500v3" /></svg></TrayCell>
          <TrayCell><svg width="13" height="13" viewBox="0 0 13 13" fill="none" stroke="#fff"><path d="M1 12A11 11 0 0 1 12.500 1" opacity=".6" /><path d="M4 12.500A8.500 8.500 0 0 1 12.500 4.500M7 12.500A5.500 5.500 0 0 1 12.500 7.500" /><circle cx="11" cy="11.500" r="1.500" fill="#fff" stroke="none" /></svg></TrayCell>
          <TrayCell><svg width="17" height="14" viewBox="0 0 17 14" fill="none" stroke="#fff"><path d="M.5 5h2.500l3.500-3.500v11L3 9.500H.5z" /><path d="M9 5q1.500 2 0 4.500M11.500 3.500q2.500 3.500 0 7" /><path d="M14 1.500q3.500 5.500 0 11" opacity=".5" /></svg></TrayCell>
          <TrayCell $w={32}><Txt $s={13} $f={SEGOE}>ع</Txt></TrayCell>
          <Clock><Txt $f={SEGOE} $ls={-0.45}>12:08 PM</Txt><Txt $f={SEGOE} $ls={-0.55}>1/11/2023</Txt></Clock>
          <TrayCell $w={30}>
            <svg width="16" height="15" viewBox="0 0 16 15"><path d="M0 0h16v12H6.500L4 15v-3H0z" fill="#fff" /><path d="M3 3h10M3 6h10M3 9h7" stroke="#1c2c42" /></svg>
            <Badge><Txt $s={10} $f={SEGOE} $w={600}>1</Txt></Badge>
          </TrayCell>
          <Spacer $w={13} />
          <PeekLine />
        </Tray>
      </Taskbar>
    </Desktop>
  );
}
